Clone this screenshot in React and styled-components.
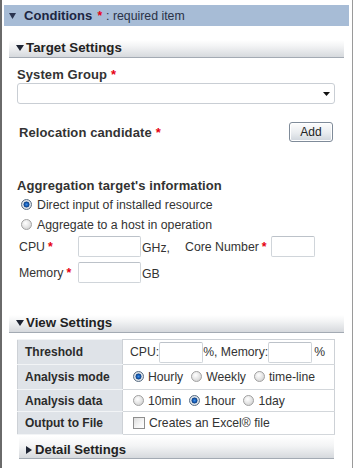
import React from "react";
import styled, { createGlobalStyle } from "styled-components";

const GlobalStyle = createGlobalStyle`
  html, body { margin: 0; padding: 0; background: #fff; }
  body {
    font-family: "Liberation Sans", Arial, sans-serif;
    font-size: 12px;
    color: #333;
  }
  * { box-sizing: border-box; }
`;

const Frame = styled.div`
  width: 353px;
  height: 468px;
  border-left: 2px solid #6a6a6a;
  border-right: 1px solid #9a9a9a;
  padding-top: 5px;
  overflow: hidden;
`;

const MainHeader = styled.div`
  margin: 0 3px 0 2px;
  height: 21px;
  background: #a7bcd6;
  display: flex;
  align-items: center;
  padding-left: 5px;
  color: #1c2642;
  white-space: nowrap;
`;

const MainTitle = styled.span`
  font-weight: bold;
  font-size: 13px;
  letter-spacing: 0.05px;
  margin-left: 8px;
`;

const MainNote = styled.span`
  font-size: 12.3px;
  color: #2a3247;
  margin-left: 4px;
`;

const Req = styled.span`
  color: #e60012;
  font-weight: bold;
  margin-left: ${(p) => p.$gap ?? 4}px;
`;

const Section = styled.section`
  margin-top: ${(p) => p.$top}px;
  padding: 0 8px 0 7px;
`;

const SectionHeader = styled.div`
  height: 18px;
  padding: 0 0 2px 7px;
  line-height: 15px;
  border-bottom: 1px solid #a3aab3;
  background: linear-gradient(to bottom, #ffffff 0%, #f3f4f5 35%, #d6d9dd 100%);
  display: flex;
  align-items: center;
  font-weight: bold;
  font-size: 13.3px;
  color: #222;
  gap: 2px;
`;

const SubHeader = styled.div`
  margin: 1px 10px 0 10px;
  padding: 6px 0 1px 7px;
  height: 23px;
  line-height: 15px;
  border-bottom: 1px solid #a3aab3;
  background: linear-gradient(to bottom, #ffffff 0%, #f3f4f5 45%, #d6d9dd 100%);
  display: flex;
  align-items: center;
  font-weight: bold;
  font-size: 13.1px;
  color: #222;
  gap: 3px;
`;

const SectionBody = styled.div`
  padding: 9px 9px 0 8px;
`;

const FieldLabel = styled.div`
  font-weight: bold;
  font-size: 13px;
  line-height: 15px;
  letter-spacing: 0.1px;
  color: #333;
  padding-left: ${(p) => p.$indent ?? 0}px;
  margin-top: ${(p) => p.$top ?? 0}px;
`;

const SelectBox = styled.div`
  margin-top: 1px;
  height: 21px;
  border: 1px solid #c9ced4;
  border-radius: 3px;
  background: #fff;
  display: flex;
  align-items: center;
  justify-content: flex-end;
  padding-right: 4px;
`;

const ActionRow = styled.div`
  margin-top: 18px;
  height: 20px;
  display: flex;
  align-items: center;
  justify-content: space-between;
`;

const Button = styled.button`
  width: 44px;
  height: 20px;
  margin-right: 2px;
  padding: 0;
  border: 1px solid #7f8b99;
  border-radius: 3px;
  background: linear-gradient(to bottom, #fdfdfd 0%, #e9ecef 55%, #cfd5dc 100%);
  box-shadow: inset 0 0 0 1px #ffffff;
  font-family: "Liberation Sans", Arial, sans-serif;
  font-size: 12px;
  color: #222;
`;

const RadioLine = styled.label`
  display: flex;
  align-items: center;
  height: 20px;
  padding-left: 4px;
  gap: 5px;
  font-size: 12.3px;
  color: #333;
  margin-top: ${(p) => p.$top ?? 0}px;
`;

const Radio = styled.span`
  flex: none;
  width: 11px;
  height: 11px;
  border-radius: 50%;
  margin-top: -1px;
  border: 1px solid ${(p) => (p.$checked ? "#5b6f84" : "#a2a2a2")};
  background: ${(p) =>
    p.$checked
      ? "radial-gradient(circle at 50% 50%, #3d8ee6 0, #1459b3 1.8px, #0c3d7c 2.7px, #e3e8ee 3.3px, #c2cad3 100%)"
      : "radial-gradient(circle at 40% 35%, #ffffff 0, #e8e8e8 45%, #c6c6c6 100%)"};
`;

const InputRow = styled.div`
  display: flex;
  align-items: center;
  height: 21px;
  margin-top: ${(p) => p.$top}px;
  font-size: 12.3px;
`;

const RowLabel = styled.span`
  width: 61px;
  padding-left: 2px;
  flex: none;
`;

const TextInput = styled.div`
  flex: none;
  width: ${(p) => p.$w}px;
  height: 21px;
  border: 1px solid #d0d5da;
  border-top-color: #bcc2c9;
  border-radius: 2px;
  background: #fff;
`;

const Unit = styled.span`
  margin-left: 1px;
  align-self: flex-end;
  line-height: 18px;
`;

const InlineLabel = styled.span`
  margin-left: 15px;
  margin-right: 4px;
`;

const Table = styled.table`
  margin: 6px 9px 0 8px;
  width: 318px;
  border-collapse: collapse;
  border: 1px solid #cdd1d6;
`;

const Tr = styled.tr`
  height: ${(p) => p.$h}px;
`;

const Th = styled.th`
  width: 105px;
  padding: 0 0 0 7px;
  text-align: left;
  font-weight: bold;
  font-size: 12px;
  color: #2b2b2b;
  background: #dfe3e8;
  border-top: 1px solid #f2f4f6;
  border-bottom: 1px solid #f2f4f6;
  border-right: 1px solid #cdd1d6;
`;

const Td = styled.td`
  padding: 0 0 0 6px;
  font-size: 12.2px;
  color: #333;
  border-bottom: 1px solid #d3d7db;
  white-space: nowrap;
`;

const Inline = styled.div`
  display: flex;
  align-items: center;
  padding-left: ${(p) => p.$indent ?? 0}px;
`;

const Option = styled.span`
  display: inline-flex;
  align-items: center;
  gap: 4px;
  margin-right: 8px;
`;

const Checkbox = styled.span`
  flex: none;
  width: 12px;
  height: 12px;
  border: 1px solid #8e8e8e;
  background: linear-gradient(135deg, #dcdcdc 0%, #f6f6f6 60%, #ffffff 100%);
  margin-right: 4px;
`;

const DownTri = ({ w = 8, h = 6, color = "#222" }) => (
  <svg width={w} height={h} viewBox={`0 0 ${w} ${h}`} style={{ flex: "none" }}>
    <polygon points={`0,0 ${w},0 ${w / 2},${h}`} fill={color} />
  </svg>
);

const RightTri = ({ w = 6, h = 8, color = "#222" }) => (
  <svg width={w} height={h} viewBox={`0 0 ${w} ${h}`} style={{ flex: "none" }}>
    <polygon points={`0,0 ${w},${h / 2} 0,${h}`} fill={color} />
  </svg>
);

export default function App() {
  return (
    <>
      <GlobalStyle />
      <Frame>
        <MainHeader>
          <DownTri w={7} h={6} color="#2b3550" />
          <MainTitle>Conditions</MainTitle>
          <Req $gap={5}>*</Req>
          <MainNote>: required item</MainNote>
        </MainHeader>

        <Section $top={14}>
          <SectionHeader>
            <DownTri w={8} h={6} color="#1e2433" />
            Target Settings
          </SectionHeader>
          <SectionBody>
            <FieldLabel>
              System Group<Req>*</Req>
            </FieldLabel>
            <SelectBox>
              <DownTri w={7} h={4} color="#111" />
            </SelectBox>

            <ActionRow>
              <FieldLabel $indent={2}>
                Relocation candidate<Req>*</Req>
              </FieldLabel>
              <Button type="button">Add</Button>
            </ActionRow>

            <FieldLabel $top={36}>Aggregation target's information</FieldLabel>
            <RadioLine $top={2}>
              <Radio $checked />
              Direct input of installed resource
            </RadioLine>
            <RadioLine>
              <Radio />
              Aggregate to a host in operation
            </RadioLine>

            <InputRow $top={1}>
              <RowLabel>
                CPU<Req $gap={3}>*</Req>
              </RowLabel>
              <TextInput $w={63} />
              <Unit>GHz,</Unit>
              <InlineLabel>
                Core Number<Req $gap={3}>*</Req>
              </InlineLabel>
              <TextInput $w={44} />
            </InputRow>
            <InputRow $top={5}>
              <RowLabel>
                Memory<Req $gap={3}>*</Req>
              </RowLabel>
              <TextInput $w={63} />
              <Unit>GB</Unit>
            </InputRow>
          </SectionBody>
        </Section>

        <Section $top={32}>
          <SectionHeader>
            <DownTri w={8} h={6} color="#1e2433" />
            View Settings
          </SectionHeader>
          <Table>
            <tbody>
              <Tr $h={25}>
                <Th>Threshold</Th>
                <Td>
                  <Inline $indent={1}>
                    CPU:
                    <TextInput $w={44} />
                    %, Memory:
                    <TextInput $w={44} />
                    <span style={{ marginLeft: 2 }}>%</span>
                  </Inline>
                </Td>
              </Tr>
              <Tr $h={25}>
                <Th>Analysis mode</Th>
                <Td>
                  <Inline $indent={4}>
                    <Option>
                      <Radio $checked />
                      Hourly
                    </Option>
                    <Option>
                      <Radio />
                      Weekly
                    </Option>
                    <Option>
                      <Radio />
                      time-line
                    </Option>
                  </Inline>
                </Td>
              </Tr>
              <Tr $h={22}>
                <Th>Analysis data</Th>
                <Td>
                  <Inline $indent={4}>
                    <Option>
                      <Radio />
                      10min
                    </Option>
                    <Option>
                      <Radio $checked />
                      1hour
                    </Option>
                    <Option>
                      <Radio />
                      1day
                    </Option>
                  </Inline>
                </Td>
              </Tr>
              <Tr $h={23}>
                <Th>Output to File</Th>
                <Td>
                  <Inline $indent={4}>
                    <Checkbox />
                    Creates an Excel® file
                  </Inline>
                </Td>
              </Tr>
            </tbody>
          </Table>
          <SubHeader>
            <RightTri w={6} h={8} color="#1e2433" />
            Detail Settings
          </SubHeader>
        </Section>
      </Frame>
    </>
  );
}
